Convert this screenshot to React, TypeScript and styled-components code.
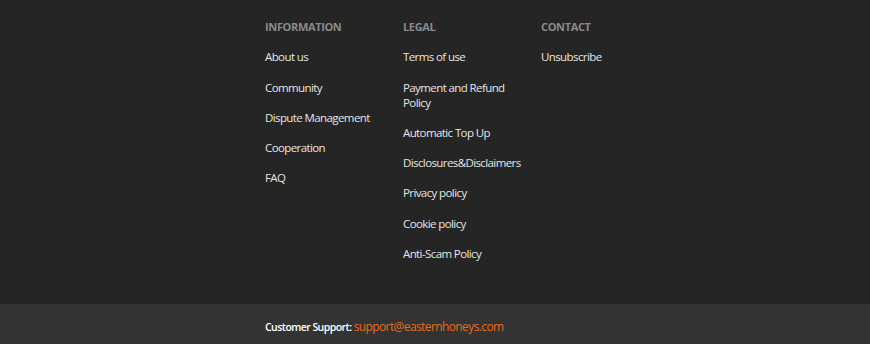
import styled, { createGlobalStyle } from "styled-components";

const GlobalStyle = createGlobalStyle`
	html, body {
		margin: 0;
		padding: 0;
		background: #252525;
		font-family: "Open Sans", "Liberation Sans", sans-serif;
	}
`;

const Footer = styled.footer`
	width: 100%;
	min-height: 344px;
	display: flex;
	flex-direction: column;
	background-color: #252525;
`;
const Columns = styled.div`
	display: grid;
	grid-template-columns: repeat(3, 138px);
	padding: 19px 0 43px 265px;
`;
const Column = styled.div`
	display: flex;
	flex-direction: column;
	gap: 15.3px;
`;
const Heading = styled.h4`
	margin: 0;
	font-size: 11px;
	line-height: 15px;
	font-weight: 700;
	color: #8a8a8a;
	letter-spacing: -0.35px;
	text-transform: uppercase;
`;
const LinkItem = styled.a`
	display: block;
	width: 118px;
	font-size: 11.5px;
	line-height: 15px;
	letter-spacing: -0.6px;
	color: #e6e6e6;
	text-decoration: none;
`;
const SupportBar = styled.div`
	flex: 1;
	background-color: #333333;
	padding: 14px 0 0 265px;
	font-size: 10.5px;
	line-height: 18px;
	letter-spacing: -0.55px;
	color: #ffffff;
	font-weight: 600;
`;
const Email = styled.a`
	font-size: 12px;
	font-weight: 400;
	letter-spacing: -0.6px;
	color: #e86a1c;
	text-decoration: none;
`;

const columns = [
	{
		title: "Information",
		links: ["About us", "Community", "Dispute Management", "Cooperation", "FAQ"],
	},
	{
		title: "Legal",
		links: [
			"Terms of use",
			"Payment and Refund Policy",
			"Automatic Top Up",
			"Disclosures&Disclaimers",
			"Privacy policy",
			"Cookie policy",
			"Anti-Scam Policy",
		],
	},
	{
		title: "Contact",
		links: ["Unsubscribe"],
	},
];

function App() {
	return (
		<>
			<GlobalStyle />
			<Footer>
				<Columns>
					{columns.map((col) => (
						<Column key={col.title}>
							<Heading>{col.title}</Heading>
							{col.links.map((l) => (
								<LinkItem key={l} href="#">
									{l}
								</LinkItem>
							))}
						</Column>
					))}
				</Columns>
				<SupportBar>
					Customer Support: <Email href="#">support@easternhoneys.com</Email>
				</SupportBar>
			</Footer>
		</>
	);
}

export default App;
